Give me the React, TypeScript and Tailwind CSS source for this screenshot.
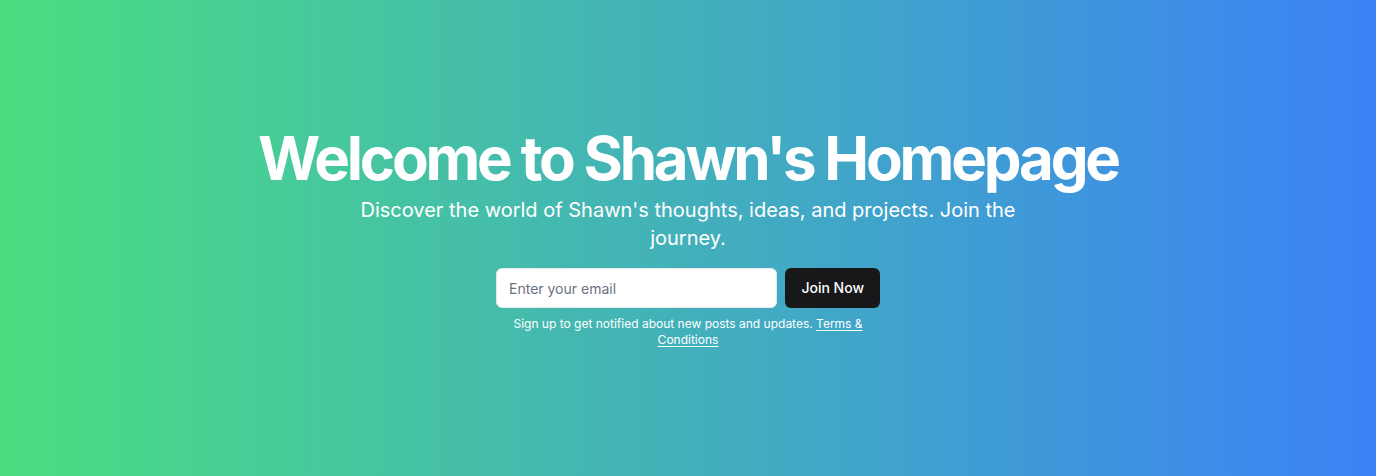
export default function App() {
  return (
    <section
      className="w-full min-h-[476px] flex items-center justify-center bg-linear-to-r/srgb from-[#4ade80] to-[#3b82f6]"
      style={{ fontFamily: "Inter, 'Noto Sans', sans-serif" }}
    >
      <div className="flex flex-col items-center space-y-4 text-center px-4">
        <div className="space-y-2">
          <h1 className="text-6xl/none font-bold tracking-[-0.053em] text-white">
            Welcome to Shawn's Homepage
          </h1>
          <p className="mx-auto max-w-[700px] text-xl text-white">
            Discover the world of Shawn's thoughts, ideas, and projects. Join the journey.
          </p>
        </div>
        <div className="w-full max-w-sm space-y-2">
          <form className="flex space-x-2" onSubmit={(e) => e.preventDefault()}>
            <input
              type="email"
              placeholder="Enter your email"
              className="flex-1 min-w-0 h-10 rounded-md border border-gray-200 bg-white px-3 py-2 text-sm text-gray-900 placeholder:text-gray-500 outline-none"
            />
            <button
              type="submit"
              className="h-10 rounded-md bg-[#18181b] px-4 text-sm font-medium text-white"
            >
              Join Now
            </button>
          </form>
          <p className="text-xs text-white">
            Sign up to get notified about new posts and updates.{" "}
            <a href="#" className="underline underline-offset-2">
              Terms &amp; Conditions
            </a>
          </p>
        </div>
      </div>
    </section>
  );
}
